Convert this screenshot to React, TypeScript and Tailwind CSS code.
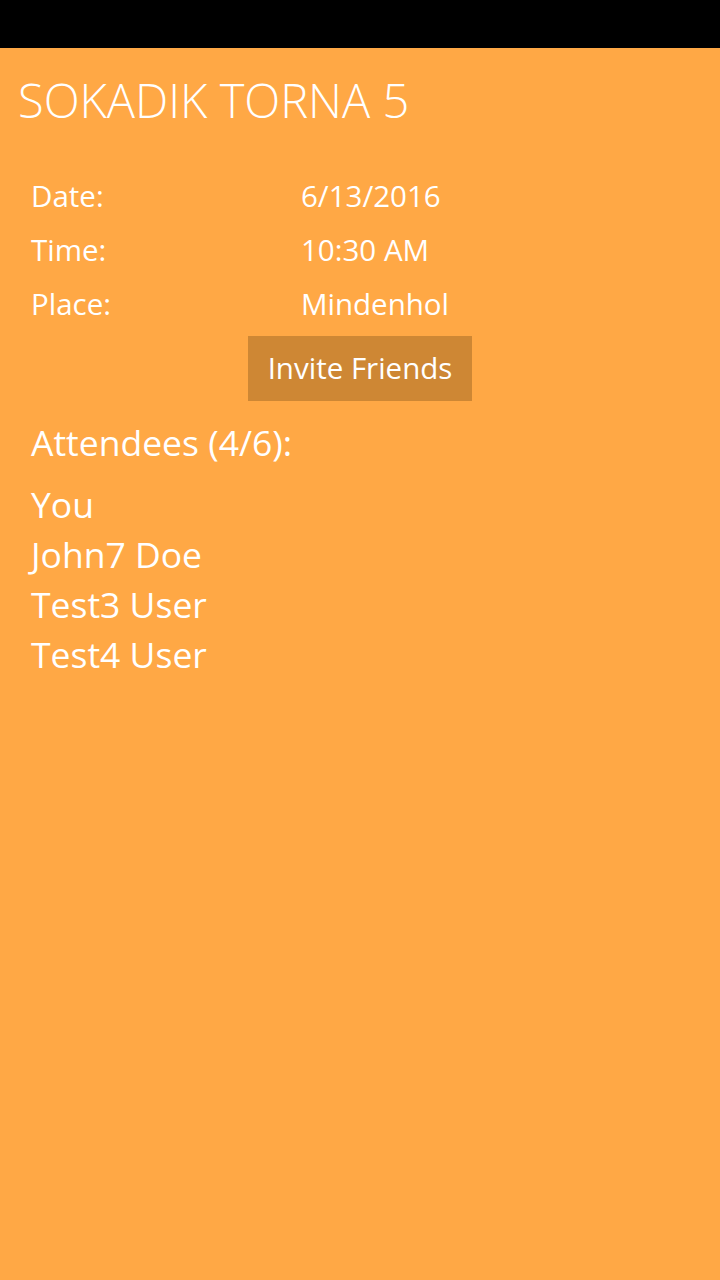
import React from "react";

export default function App() {
  const rows = [
    ["Date:", "6/13/2016"],
    ["Time:", "10:30 AM"],
    ["Place:", "Mindenhol"],
  ];
  const names = ["You", "John7 Doe", "Test3 User", "Test4 User"];
  return (
    <div className="w-[720px] h-[1280px] bg-[#ffa845] text-white flex flex-col" style={{ fontFamily: '"Open Sans", "Noto Sans", sans-serif' }}>
      <div className="h-12 bg-black shrink-0" />
      <div className="pl-[18px] pt-[22px] text-[47px] leading-[60px] font-light">SOKADIK TORNA 5</div>
      <div className="pl-[31px] pt-[39px] flex flex-col">
        {rows.map(([a, b]) => (
          <div key={a} className="flex h-[54px] items-center text-[29.5px] font-normal">
            <div className="w-[270px]">{a}</div>
            <div>{b}</div>
          </div>
        ))}
      </div>
      <div className="pl-[248px] pt-[5px]">
        <div className="w-[224px] h-[65px] bg-[#ce8734] flex items-center justify-center text-[29.5px] font-normal">Invite Friends</div>
      </div>
      <div className="pl-[31px] pt-[17px] text-[35.5px] leading-[48px] font-normal">Attendees (4/6):</div>
      <div className="pl-[31px] pt-[14px] flex flex-col text-[35.5px] font-normal">
        {names.map((n) => (
          <div key={n} className="h-[50px] flex items-center">{n}</div>
        ))}
      </div>
    </div>
  );
}
